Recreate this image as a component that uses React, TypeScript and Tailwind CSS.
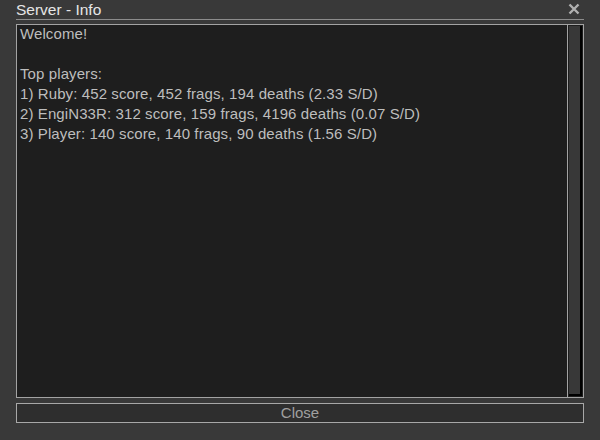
import React from "react";

const lines = [
  "Welcome!",
  "",
  "Top players:",
  "1) Ruby: 452 score, 452 frags, 194 deaths (2.33 S/D)",
  "2) EngiN33R: 312 score, 159 frags, 4196 deaths (0.07 S/D)",
  "3) Player: 140 score, 140 frags, 90 deaths (1.56 S/D)",
];

export default function App() {
  return (
    <div
      className="flex h-[440px] w-[600px] flex-col bg-[#393939] px-4 text-[#bdbdbd]"
      style={{ fontFamily: '"Liberation Sans", Arial, sans-serif' }}
    >
      <div className="flex h-5 items-center justify-between border-b border-[#8c8c8c]">
        <span className="text-[15.5px] leading-5 text-[#e6e6e6]">Server - Info</span>
        <svg width="12" height="12" viewBox="0 0 12 12" className="mr-[4px] mt-[-2px]">
          <path d="M1.5 1.5 L10.5 10.5 M10.5 1.5 L1.5 10.5" stroke="#b0b0b0" strokeWidth="2.4" />
        </svg>
      </div>

      <div className="mt-1 flex h-[374px] border border-[#a3a3a3] bg-[#1e1e1e]">
        <div className="-mt-[1px] flex-1 px-[3px] text-[15px] leading-5 tracking-[0.1px]">
          {lines.map((line, i) => (
            <div key={i} className="h-5">
              {line}
            </div>
          ))}
        </div>
        <div className="flex w-[16px] border-l border-[#a3a3a3] bg-[#1e1e1e] p-px">
          <div className="flex-1 border-b-2 border-r-2 border-black bg-[#383838]" />
        </div>
      </div>

      <button
        type="button"
        className="mt-[5px] h-5 border border-[#a8a8a8] bg-[#2e2e2e] text-[15px] leading-[18px] text-[#a0a0a0]"
      >
        Close
      </button>
    </div>
  );
}
